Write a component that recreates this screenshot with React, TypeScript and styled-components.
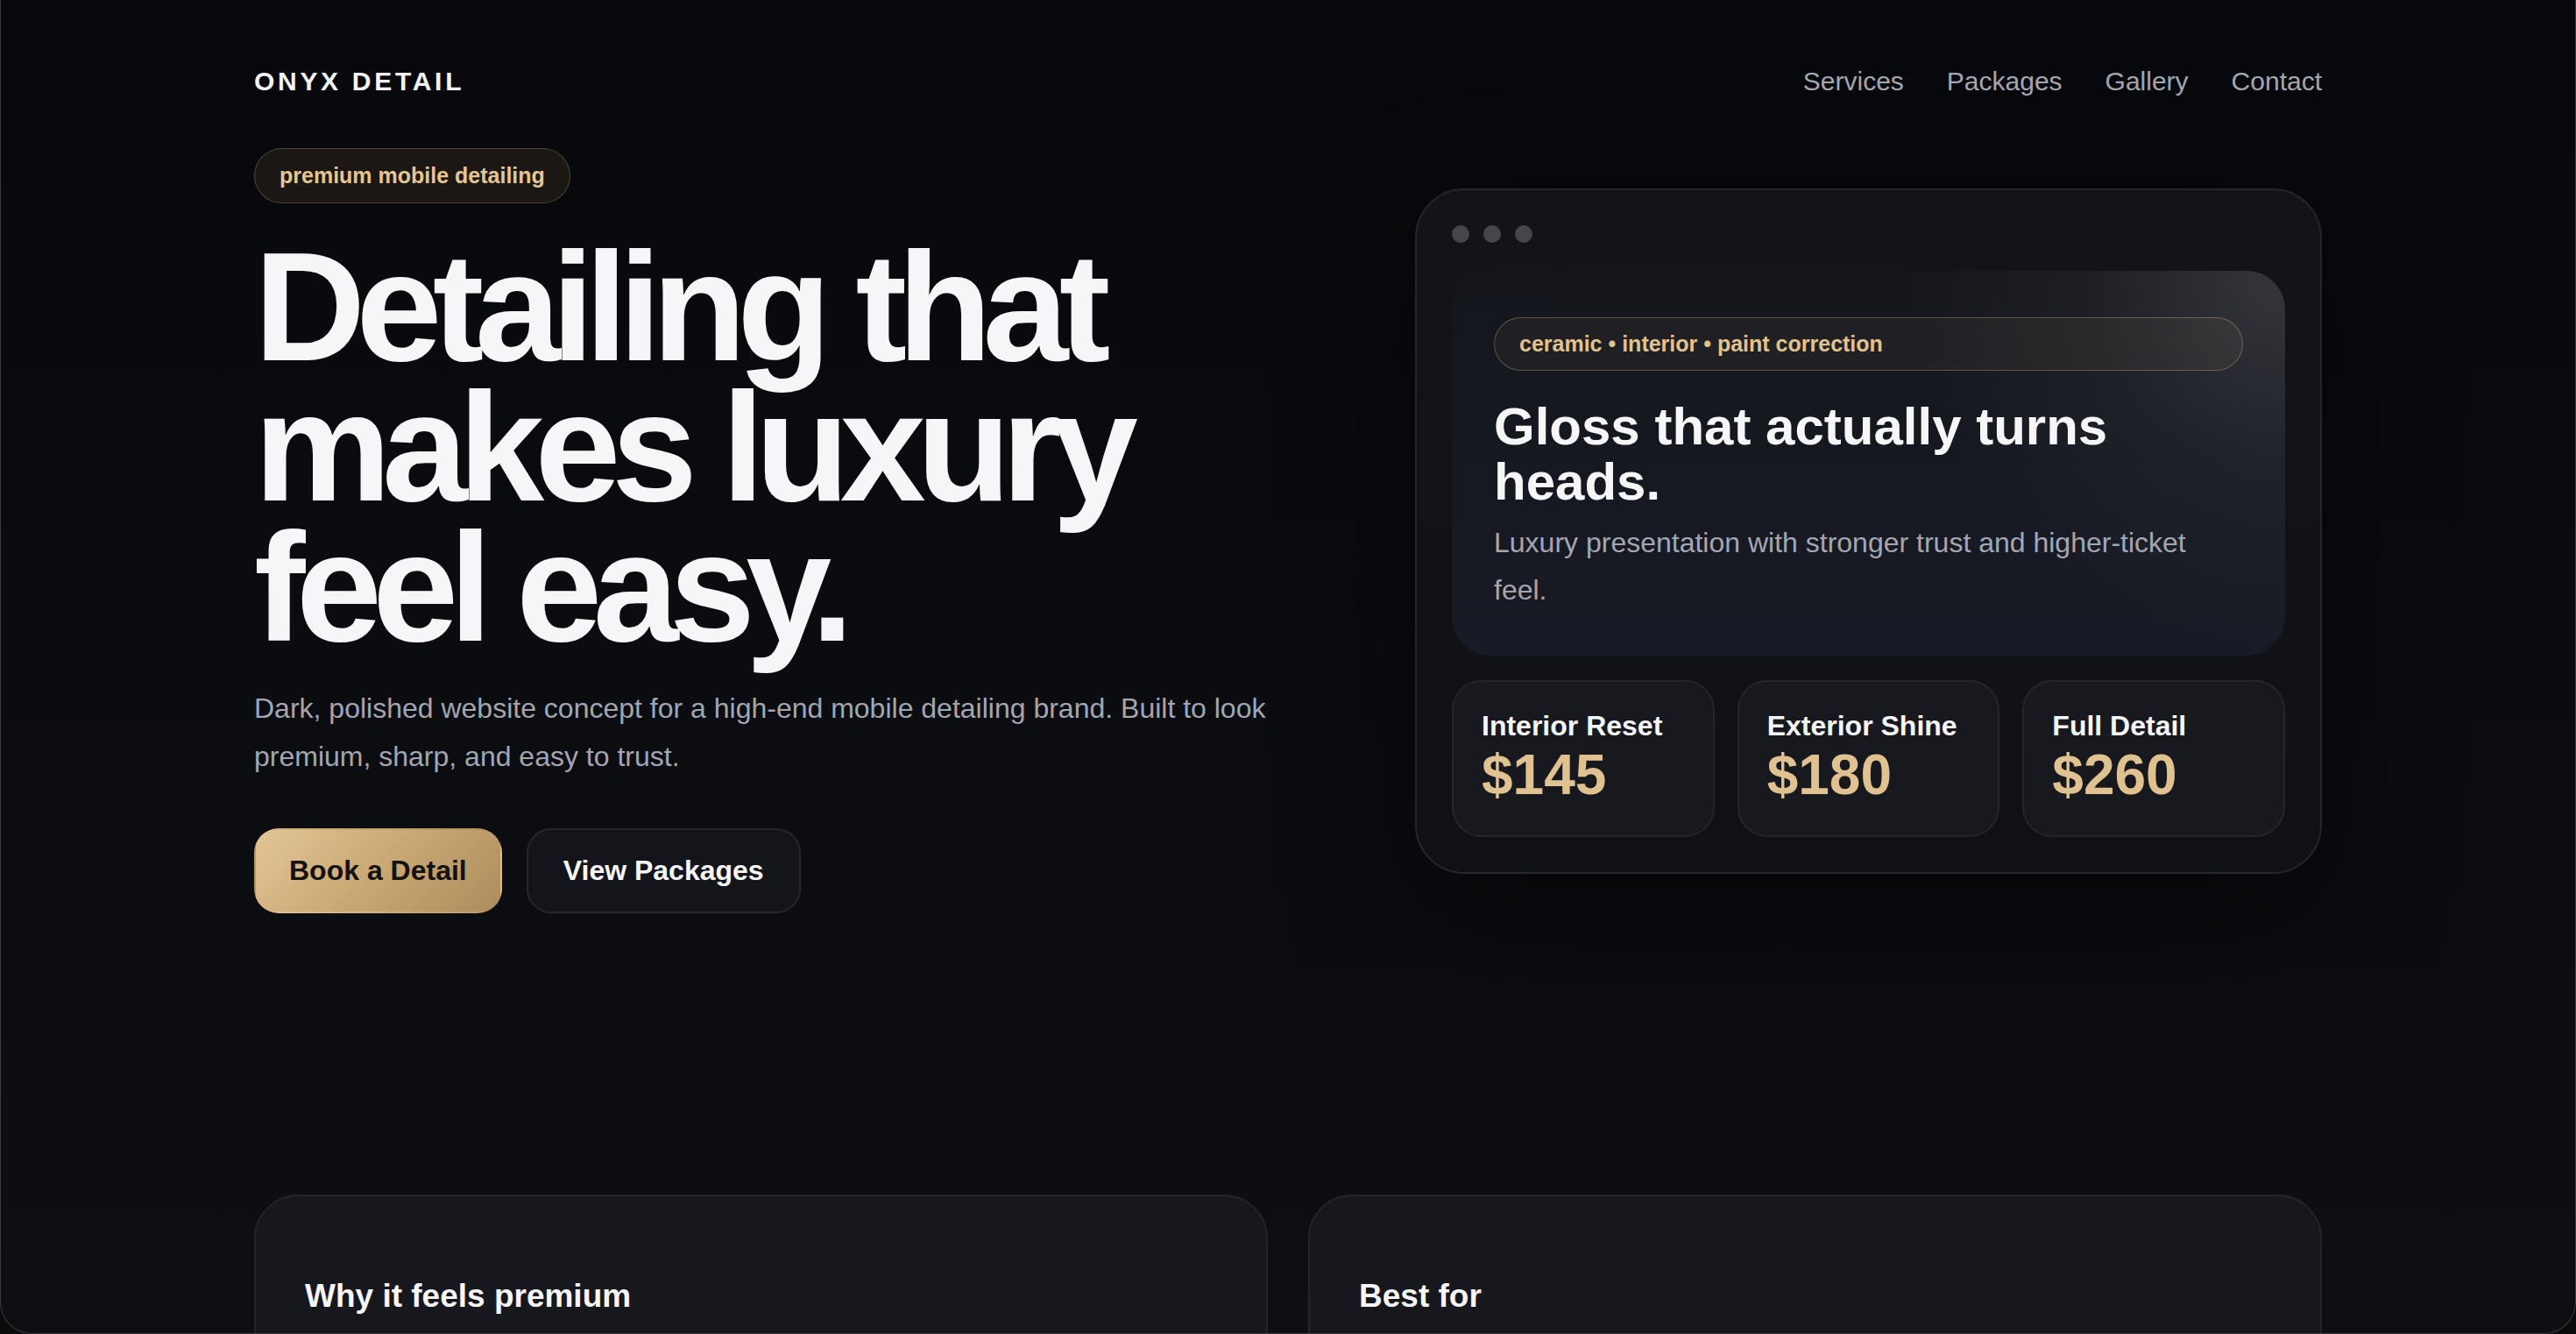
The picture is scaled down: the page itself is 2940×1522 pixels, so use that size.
import styled, { createGlobalStyle } from 'styled-components';

const GlobalStyle = createGlobalStyle`
  html,
  body {
    margin: 0;
    padding: 0;
    background: #0b0b0c;
  }
  * {
    box-sizing: border-box;
  }
  body {
    font-family: 'Liberation Sans', Arial, Helvetica, sans-serif;
    color: #f5f5f7;
    -webkit-font-smoothing: antialiased;
  }
`;

const packages = [
  { name: 'Interior Reset', price: '$145' },
  { name: 'Exterior Shine', price: '$180' },
  { name: 'Full Detail', price: '$260' },
];

const navLinks = ['Services', 'Packages', 'Gallery', 'Contact'];

const App = () => {
  return (
    <>
      <GlobalStyle />
      <Frame>
        <Container>
          <Header>
            <Logo>ONYX DETAIL</Logo>
            <Nav>
              {navLinks.map((link) => (
                <NavLink key={link} href="#">
                  {link}
                </NavLink>
              ))}
            </Nav>
          </Header>

          <Hero>
            <HeroCopy>
              <Pill>premium mobile detailing</Pill>
              <Title>
                Detailing that
                <br />
                makes luxury
                <br />
                feel easy.
              </Title>
              <Lead>
                Dark, polished website concept for a high-end mobile detailing
                brand. Built to look premium, sharp, and easy to trust.
              </Lead>
              <Actions>
                <Button variant="primary">Book a Detail</Button>
                <Button variant="ghost">View Packages</Button>
              </Actions>
            </HeroCopy>

            <Mockup>
              <Dots>
                <Dot />
                <Dot />
                <Dot />
              </Dots>
              <Showcase>
                <Tag>ceramic • interior • paint correction</Tag>
                <ShowcaseTitle>Gloss that actually turns heads.</ShowcaseTitle>
                <ShowcaseText>
                  Luxury presentation with stronger trust and higher-ticket
                  feel.
                </ShowcaseText>
              </Showcase>
              <PriceGrid>
                {packages.map((pkg) => (
                  <PriceCard key={pkg.name}>
                    <PriceName>{pkg.name}</PriceName>
                    <Price>{pkg.price}</Price>
                  </PriceCard>
                ))}
              </PriceGrid>
            </Mockup>
          </Hero>

          <Features>
            <FeatureCard>
              <FeatureTitle>Why it feels premium</FeatureTitle>
            </FeatureCard>
            <FeatureCard>
              <FeatureTitle>Best for</FeatureTitle>
            </FeatureCard>
          </Features>
        </Container>
      </Frame>
    </>
  );
};

export default App;

const Frame = styled.div`
  height: 100vh;
  overflow: hidden;
  border: 1px solid #3a3b40;
  border-top: none;
  border-radius: 0 0 36px 36px;
  background: linear-gradient(180deg, #07080b 0%, #0b0c10 45%, #0e0f13 100%);
`;

const Container = styled.div`
  max-width: 2360px;
  margin: 0 auto;
`;

const Header = styled.header`
  display: flex;
  align-items: center;
  justify-content: space-between;
  padding-top: 76px;
`;

const Logo = styled.div`
  font-size: 30px;
  font-weight: 700;
  letter-spacing: 3.7px;
  color: #f4f4f6;
`;

const Nav = styled.nav`
  display: flex;
  align-items: center;
  gap: 49px;
`;

const NavLink = styled.a`
  font-size: 30px;
  color: #a4a7b0;
  text-decoration: none;
`;

const Hero = styled.section`
  display: grid;
  grid-template-columns: 1fr 1035px;
  gap: 64px;
  align-items: center;
  padding-top: 59px;
`;

const HeroCopy = styled.div`
  display: flex;
  flex-direction: column;
  align-items: flex-start;
`;

const Pill = styled.span`
  display: inline-block;
  padding: 16px 28px;
  border-radius: 999px;
  border: 1px solid rgba(224, 194, 143, 0.28);
  background: #1a1714;
  color: #e4c692;
  font-size: 25px;
  font-weight: 700;
`;

const Title = styled.h1`
  margin: 38px 0 0;
  font-size: 176px;
  line-height: 0.91;
  font-weight: 700;
  letter-spacing: -0.06em;
  color: #f6f6f8;
`;

const Lead = styled.p`
  margin: 31px 0 0;
  max-width: 1200px;
  font-size: 32px;
  line-height: 1.7;
  color: #a3a6b0;
`;

const Actions = styled.div`
  display: flex;
  gap: 28px;
  margin-top: 55px;
`;

const Button = styled.button<{ variant: 'primary' | 'ghost' }>`
  font-family: inherit;
  font-size: 32px;
  font-weight: 700;
  line-height: normal;
  padding: 28px 38px;
  border-radius: 28px;
  cursor: pointer;
  ${({ variant }) =>
    variant === 'primary'
      ? `
    border: 2px solid transparent;
    background: linear-gradient(135deg, #e3c596 0%, #c9a873 50%, #ad8d5c 100%);
    color: #141210;
  `
      : `
    padding: 28px 40px;
    border: 2px solid #26272c;
    background: #14151a;
    color: #f6f6f8;
  `}
`;

const Mockup = styled.div`
  padding: 40px;
  border-radius: 56px;
  border: 2px solid #25262b;
  background: linear-gradient(180deg, #131418 0%, #101115 100%);
  box-shadow: 0 50px 140px rgba(0, 0, 0, 0.55);
`;

const Dots = styled.div`
  display: flex;
  gap: 16px;
  margin-bottom: 32px;
`;

const Dot = styled.span`
  width: 20px;
  height: 20px;
  border-radius: 50%;
  background: #44464c;
`;

const Showcase = styled.div`
  padding: 53px 48px 47px;
  border-radius: 44px;
  background:
    radial-gradient(circle at 100% 0%, rgba(255, 255, 255, 0.14) 0%, rgba(255, 255, 255, 0.04) 22%, transparent 42%),
    linear-gradient(180deg, #14161c 0%, #181b25 100%);
`;

const Tag = styled.div`
  padding: 15px 28px;
  border-radius: 999px;
  border: 1px solid rgba(224, 194, 143, 0.32);
  background: rgba(224, 194, 143, 0.06);
  color: #e2c38f;
  font-size: 25px;
  font-weight: 700;
`;

const ShowcaseTitle = styled.h2`
  margin: 32px 0 0;
  font-size: 60px;
  line-height: 1.05;
  font-weight: 700;
  color: #f6f6f8;
`;

const ShowcaseText = styled.p`
  margin: 11px 0 0;
  font-size: 32px;
  line-height: 1.7;
  color: #a4a7b3;
`;

const PriceGrid = styled.div`
  display: grid;
  grid-template-columns: repeat(3, 1fr);
  gap: 26px;
  margin-top: 28px;
`;

const PriceCard = styled.div`
  padding: 32px;
  border-radius: 34px;
  border: 2px solid #25262b;
  background: #18191e;
`;

const PriceName = styled.div`
  font-size: 32px;
  font-weight: 700;
  color: #f6f6f8;
`;

const Price = styled.div`
  font-size: 64px;
  font-weight: 700;
  color: #e0c290;
`;

const Features = styled.section`
  display: grid;
  grid-template-columns: 1fr 1fr;
  gap: 46px;
  margin-top: 321px;
`;

const FeatureCard = styled.div`
  padding: 56px;
  min-height: 420px;
  border-radius: 50px;
  border: 2px solid #24252a;
  background: #17181d;
`;

const FeatureTitle = styled.h3`
  margin: 37px 0 0;
  font-size: 37px;
  font-weight: 700;
  color: #f6f6f8;
`;
